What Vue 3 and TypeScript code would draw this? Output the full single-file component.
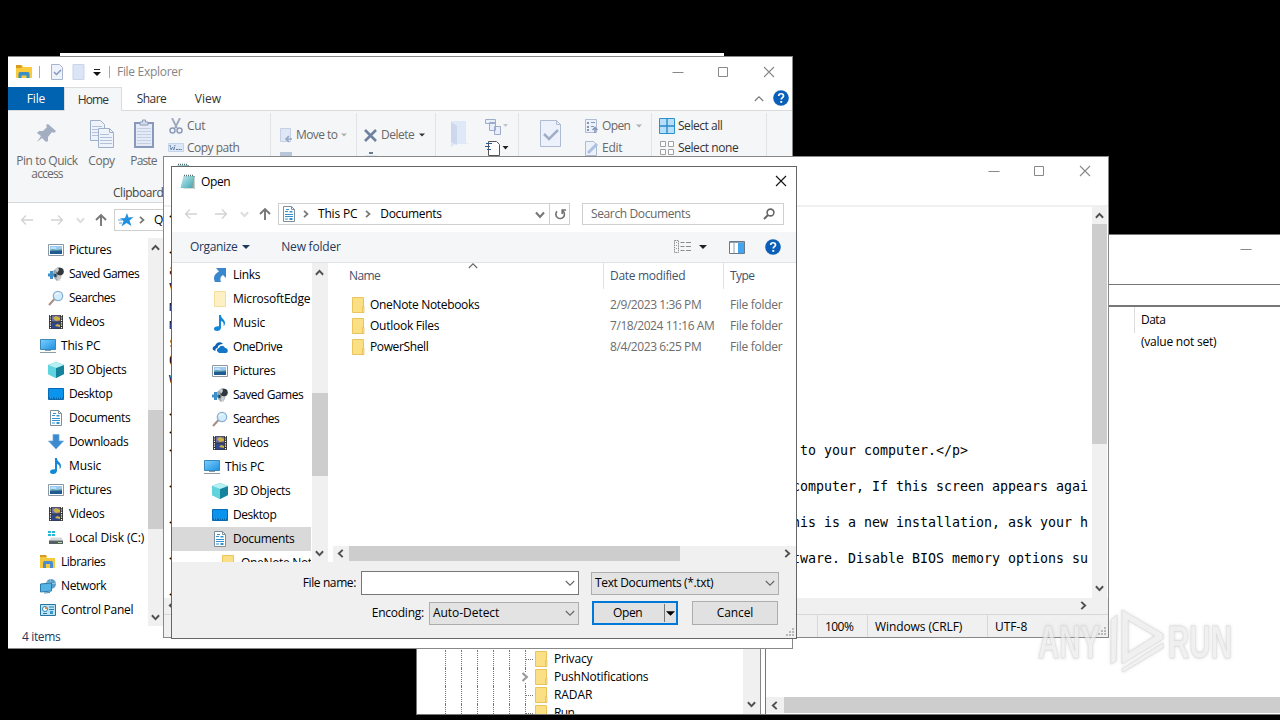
<script setup lang="ts">
interface TreeRow {
  icon: string
  label: string
  width: number
  level: number
  selected?: boolean
}

const explorerTree: TreeRow[] = [
  { icon: 'pictures', label: 'Pictures', width: 42, level: 2 },
  { icon: 'games', label: 'Saved Games', width: 70, level: 2 },
  { icon: 'search', label: 'Searches', width: 46, level: 2 },
  { icon: 'videos', label: 'Videos', width: 35, level: 2 },
  { icon: 'pc', label: 'This PC', width: 39, level: 1 },
  { icon: 'cube', label: '3D Objects', width: 57, level: 2 },
  { icon: 'desktop', label: 'Desktop', width: 43, level: 2 },
  { icon: 'doc', label: 'Documents', width: 61, level: 2 },
  { icon: 'download', label: 'Downloads', width: 59, level: 2 },
  { icon: 'music', label: 'Music', width: 32, level: 2 },
  { icon: 'pictures', label: 'Pictures', width: 42, level: 2 },
  { icon: 'videos', label: 'Videos', width: 35, level: 2 },
  { icon: 'disk', label: 'Local Disk (C:)', width: 75, level: 2 },
  { icon: 'library', label: 'Libraries', width: 44, level: 1 },
  { icon: 'network', label: 'Network', width: 45, level: 1 },
  { icon: 'control', label: 'Control Panel', width: 72, level: 1 },
]

const dialogTree: TreeRow[] = [
  { icon: 'link', label: 'Links', width: 27, level: 2 },
  { icon: 'palefolder', label: 'MicrosoftEdge', width: 77, level: 2 },
  { icon: 'music', label: 'Music', width: 32, level: 2 },
  { icon: 'onedrive', label: 'OneDrive', width: 49, level: 2 },
  { icon: 'pictures', label: 'Pictures', width: 42, level: 2 },
  { icon: 'games', label: 'Saved Games', width: 70, level: 2 },
  { icon: 'search', label: 'Searches', width: 46, level: 2 },
  { icon: 'videos', label: 'Videos', width: 35, level: 2 },
  { icon: 'pc', label: 'This PC', width: 39, level: 1 },
  { icon: 'cube', label: '3D Objects', width: 57, level: 2 },
  { icon: 'desktop', label: 'Desktop', width: 43, level: 2 },
  { icon: 'doc', label: 'Documents', width: 61, level: 2, selected: true },
  { icon: 'folder', label: 'OneNote Notebooks', width: 109, level: 3 },
]

const files = [
  { name: 'OneNote Notebooks', w: 109, date: '2/9/2023 1:36 PM', dw: 91 },
  { name: 'Outlook Files', w: 69, date: '7/18/2024 11:16 AM', dw: 104 },
  { name: 'PowerShell', w: 58, date: '8/4/2023 6:25 PM', dw: 91 },
]

const keys = [
  { label: 'Privacy', w: 38 },
  { label: 'PushNotifications', w: 94, expandable: true },
  { label: 'RADAR', w: 38 },
  { label: 'Run', w: 20 },
]

const lines = [
  { a: '<' }, { a: '' }, { a: '<' }, { a: 'a' }, { a: 'V' }, { a: 'm' }, { a: 'm' },
  { a: 's' }, { a: 'O' }, { a: 'w' }, { a: '' }, { a: '<' }, { a: '<' },
  { a: '<', b: 'to your computer.</p>', short: true }, { a: '' },
  { a: '<', b: 'computer, If this screen appears agai' }, { a: '' },
  { a: '<', b: 'this is a new installation, ask your h' }, { a: '' },
  { a: '<', b: 'software. Disable BIOS memory options su' }, { a: '' }, { a: '<' },
]

// Spreads a label's letters so that it occupies the given width in pixels.
const vFit = {
  mounted(el: HTMLElement, binding: { value: number }) {
    const range = document.createRange()
    range.selectNodeContents(el)
    const natural = range.getBoundingClientRect().width
    const count = (el.textContent ?? '').length
    if (count > 0) el.style.letterSpacing = `${(binding.value + 0.3 - natural) / count}px`
  },
}
</script>

<template>
  <main class="desktop">
    <svg class="defs" width="0" height="0">
      <defs>
        <linearGradient id="gSky" x1="0" y1="0" x2="1" y2="1"><stop offset="0" stop-color="#7cd0ff" /><stop offset="1" stop-color="#1c8fe0" /></linearGradient>
        <linearGradient id="gPad" x1="0" y1="0" x2="1" y2="1"><stop offset="0" stop-color="#c4eef2" /><stop offset="1" stop-color="#3fa5b3" /></linearGradient>
        <symbol id="pictures" viewBox="0 0 16 16"><path d="M.5 2.500h15v11H.5z" fill="#fff" stroke="#8b97a3" /><path d="M2 4h12v8H2z" fill="#9ccaf2" /><path d="M2 8c3-2 5 1 12-1v2H2z" fill="#5c9ba4" /><path d="M2 9l12-.5V12H2z" fill="#215b94" /><path d="M3 5.500h5v1H3z" fill="#e8f6ff" /></symbol>
        <symbol id="games" viewBox="0 0 16 16"><path d="M5 5l5-4 3 1 1 4-1 6-4 3-3-3z" fill="#9aa5ac" /><circle cx="12" cy="5.500" r="3.800" fill="#30383d" /><path d="M7 3l3-2 1 3-2 3z" fill="#c6cdd2" /><path d="M0 7.500h2V5h3v2.500h2v3H5V13H2v-2.500H0z" fill="#3f8fc8" /><path d="M6.500 8h2v3h-2z" fill="#2f3b44" /><path d="M10 9l3 1-1.500 5-3-2z" fill="#c8ccd0" /></symbol>
        <symbol id="search" viewBox="0 0 16 16"><path d="M1 15l5.500-6" stroke="#a98d82" stroke-width="2" /><circle cx="10" cy="6" r="4.700" fill="#d3ecfb" stroke="#8ab0d0" stroke-width="1.300" /><path d="M7.500 5c1-2 3-2 4-1.500" stroke="#fff" fill="none" /></symbol>
        <symbol id="videos" viewBox="0 0 16 16"><path d="M1 1h14v14H1z" fill="#333" /><path d="M4 1.500h8v6H4z" fill="#6f72a8" /><path d="M4 8.500h8v6H4z" fill="#31468c" /><path d="M5 4l3-2 4 2v2l-4 1zM7 12l2-2 3 1v2z" fill="#d0b23f" /><path d="M2.500 1v14M13.500 1v14" stroke="#fff" stroke-width="1.200" stroke-dasharray="1.200 1.200" /></symbol>
        <symbol id="pc" viewBox="0 0 16 16"><path d="M.5 1.500h15v10H.5z" fill="url(#gSky)" stroke="#3a87ba" /><path d="M5 12.500h6M0 14.500h16" stroke="#8d9ba5" /></symbol>
        <symbol id="cube" viewBox="0 0 16 16"><path d="M8 0l8 3v9l-8 4-8-4V3z" fill="#36b5c8" /><path d="M0 3l8 3v10l-8-4z" fill="#5fd3de" /><path d="M8 6l8-3v9l-8 4z" fill="#15839c" /><path d="M0 3l8-3 8 3-8 3z" fill="#b6f0f2" /></symbol>
        <symbol id="desktop" viewBox="0 0 16 16"><path d="M.5 2.500h15v11H.5z" fill="#0b94ee" stroke="#0869b5" /><path d="M1 11.500h14V13H1z" fill="#0868ad" /><path d="M2 12h3M7 12h7" stroke="#50b0f0" stroke-dasharray="1 1" /></symbol>
        <symbol id="doc" viewBox="0 0 16 16"><path d="M2.500.5h8l3 3v12h-11z" fill="#fff" stroke="#7e8e9a" /><path d="M10.500.5v3h3" fill="none" stroke="#7e8e9a" /><path d="M4 5.500h3M4 8.500h8M4 10.500h8M4 13h3" stroke="#3192cf" /><path d="M5 3h3v1H5zM8.500 5h3v1.500h-3zM8.500 12h3v2h-3z" fill="#3192cf" /></symbol>
        <symbol id="download" viewBox="0 0 16 16"><path d="M5 .5h6V7h4.500L8 15 .5 7H5z" fill="#3c8ad0" stroke="#69a9df" stroke-width=".7" /></symbol>
        <symbol id="music" viewBox="0 0 16 16"><path d="M7 0h2c0 4 4 4 4 8 0 2-1 3-1.500 3 .8-3-.8-4.500-2.500-5v6.500C9 15 7 16 5 16s-3-1-3-2.300C2 12 4 11 7 11.300z" fill="#1487d8" /></symbol>
        <symbol id="disk" viewBox="0 0 16 16"><path d="M0 1h3v2H0zM4 1h3v2H4zM0 4h3v2H0zM4 4h3v2H4z" fill="#25b7d6" /><path d="M3 7.500h10.500l1.500 3H1z" fill="#d5d8da" /><path d="M1 10.500h14V14H1z" fill="#586065" /><path d="M10 12.500h4" stroke="#9fe28a" /></symbol>
        <symbol id="library" viewBox="0 0 16 16"><path d="M0 2h6l1 2h8v10H0z" fill="#f5c93d" /><path d="M0 1h6l1 2H0z" fill="#d79921" /><path d="M3 14V9c0-2 2-2 2-2h6s2 0 2 2v5h-3v-4H6v4z" fill="#4b8bd0" /></symbol>
        <symbol id="explorer" viewBox="0 0 16 16"><path d="M0 1h6l1 2h9v11H0z" fill="#fbcb3c" /><path d="M0 1h5l1 3H0z" fill="#d99a1d" /><path d="M2.500 14V10c0-1.500 1-2 2-2h7c1 0 2 .5 2 2v4h-3v-2.500h-5V14z" fill="#3b8fc4" /></symbol>
        <symbol id="network" viewBox="0 0 16 16"><circle cx="11" cy="6" r="5" fill="#5b9fc9" /><path d="M7 4c3 2 5 2 9 1M11 1c-2 4-1 7 0 10" stroke="#9fcbe4" fill="none" /><path d="M.5 6l11-1v8l-11 1z" fill="#54b4e6" stroke="#2c7aa7" /><path d="M4 15l6-.5" stroke="#4b89aa" /></symbol>
        <symbol id="control" viewBox="0 0 16 16"><path d="M.5 2.500h15v11H.5z" fill="#b9e4f8" stroke="#28749c" /><circle cx="5" cy="7" r="2.500" fill="#fff" stroke="#2382b5" /><path d="M5 7V4.500A2.500 2.500 0 0 1 7.500 7z" fill="#e68b36" /><path d="M9 5h5M9 7.500h5M3 11.500h4" stroke="#2579a7" /><path d="M10 9h3v3h-3z" fill="#3a98c7" /></symbol>
        <symbol id="link" viewBox="0 0 16 16"><path d="M4 1h10v10l-3-3c-3 2-3 4-2 7H3C1 11 2 7 7 4.500z" fill="#3a87cc" /></symbol>
        <symbol id="folder" viewBox="0 0 16 16"><path d="M2.500.5h11v15h-11z" fill="#fbdf84" stroke="#e9c45c" /><path d="M12.500 9.500h1.500v6h-1.500z" fill="#fce79f" stroke="#e2b84a" stroke-width=".7" /></symbol>
        <symbol id="palefolder" viewBox="0 0 16 16"><path d="M2.500.5h11v15h-11z" fill="#fdf0c3" stroke="#f3dc9c" /></symbol>
        <symbol id="onedrive" viewBox="0 0 16 16"><path d="M1 11c-1-3 1-4 2-4 1-4 6-5 8-2-3 0-5 1-5.500 4C4 9 3 10 3.500 12z" fill="#0a63b5" /><path d="M6 13c-2-1-1-4 1-4 1-3 5-3 6 0 3 0 4 4 1 5H7z" fill="#1277c9" /></symbol>
        <symbol id="notepad" viewBox="0 0 16 16"><path d="M4 2h11v13H12L1 14z" fill="#7fa5a5" /><path d="M3.500 2h10L11.500 14H.5z" fill="url(#gPad)" /><path d="M4 1.500h10" stroke="#54696b" stroke-width="1.500" stroke-dasharray="1 1" /><path d="M14.300 3v11.500H4" fill="none" stroke="#d9ded0" /></symbol>
        <symbol id="star" viewBox="0 0 16 16"><path d="M9 1l1.500 4.500 5-.5-4 3.500 2 5.500-5-3-5 3.500L5.500 9 2 6.500l5-.5z" fill="#2090e0" /><path d="M0 8h4M1 11h3" stroke="#57a8df" /></symbol>
        <symbol id="help" viewBox="0 0 16 16"><circle cx="8" cy="8" r="7.800" fill="#0a5fb8" /><path d="M5.700 6c0-3 4.800-3 4.800 0 0 1.700-2.300 1.700-2.300 3.600" fill="none" stroke="#fff" stroke-width="1.700" /><path d="M7.300 11h1.900v1.800H7.300z" fill="#fff" /></symbol>
        <symbol id="back" viewBox="0 0 16 16"><path d="M14 8H2.500M7 3.500L2.500 8 7 12.500" fill="none" stroke="currentColor" stroke-width="1.300" /></symbol>
        <symbol id="forward" viewBox="0 0 16 16"><path d="M2 8h11.500M9 3.500L13.500 8 9 12.500" fill="none" stroke="currentColor" stroke-width="1.300" /></symbol>
        <symbol id="up" viewBox="0 0 16 16"><path d="M8 14V3M3 8l5-5 5 5" fill="none" stroke="currentColor" stroke-width="1.900" /></symbol>
        <symbol id="down" viewBox="0 0 8 8"><path d="M.8 2L4 5.500 7.200 2" fill="none" stroke="currentColor" stroke-width="1.700" /></symbol>
        <symbol id="thindown" viewBox="0 0 10 10"><path d="M.8 3L5 7.200 9.200 3" fill="none" stroke="currentColor" stroke-width="1.100" /></symbol>
        <symbol id="min" viewBox="0 0 12 12"><path d="M.5 6.500h11" stroke="currentColor" /></symbol>
        <symbol id="max" viewBox="0 0 12 12"><path d="M1.500 1.500h9v9h-9z" fill="none" stroke="currentColor" /></symbol>
        <symbol id="close" viewBox="0 0 12 12"><path d="M1 1l10 10M11 1L1 11" stroke="currentColor" stroke-width="1.100" /></symbol>
        <symbol id="caret" viewBox="0 0 8 8"><path d="M0 2h8L4 6z" fill="currentColor" /></symbol>
        <symbol id="refresh" viewBox="0 0 12 12"><path d="M9 3.300A4.300 4.300 0 1 1 3.300 2.800M3.800 6V2H0" fill="none" stroke="currentColor" stroke-width="1.600" transform="matrix(-1 0 0 1 12 0)" /></symbol>
        <symbol id="glass" viewBox="0 0 12 12"><circle cx="7.500" cy="4.500" r="3.400" fill="none" stroke="currentColor" stroke-width="1.600" /><path d="M5 7L1 11" stroke="currentColor" stroke-width="1.900" /></symbol>
        <symbol id="grip" viewBox="0 0 9 9"><path d="M6 0h2v2H6zM3 3h2v2H3zM6 3h2v2H6zM0 6h2v2H0zM3 6h2v2H3zM6 6h2v2H6z" fill="#b9b9b9" /></symbol>
      </defs>
    </svg>

    <div class="behind"></div>

    <section class="window registry">
      <header class="reg-title"><svg class="wb"><use href="#min" /></svg></header>
      <div class="reg-address"></div>
      <div class="reg-body">
        <div class="reg-tree">
          <ul class="reg-keys">
            <li v-for="k in keys" :key="k.label">
              <i v-for="n in 5" :key="n" class="rail"></i>
              <i class="rail last"><svg v-if="k.expandable" class="exp"><use href="#down" /></svg><b v-else></b></i>
              <svg class="ico"><use href="#folder" /></svg>
              <span v-fit="k.w">{{ k.label }}</span>
            </li>
          </ul>
          <div class="scroll reg-v"><svg class="ar"><use href="#down" /></svg></div>
        </div>
        <div class="reg-values">
          <div class="reg-head"><span v-fit="24">Data</span></div>
          <div class="reg-row"><span v-fit="75">(value not set)</span></div>
          <div class="reg-h"><svg class="ar left"><use href="#down" /></svg><div class="thumb"></div></div>
        </div>
      </div>
    </section>

    <section class="window explorer">
      <header class="ex-title">
        <svg class="ico"><use href="#explorer" /></svg>
        <i class="bar"></i>
        <svg class="q1" viewBox="0 0 14 16"><path d="M1.500.5h8l3 3v12h-11z" fill="#edf2fb" stroke="#a8b5cf" /><path d="M4 8l2.500 2.500L11 6" fill="none" stroke="#8799bd" stroke-width="1.500" /></svg>
        <svg class="q2" viewBox="0 0 14 16"><path d="M1 .5h11v15H1z" fill="#dbe5f5" stroke="#c8d5eb" /></svg>
        <svg class="q3" viewBox="0 0 8 8"><path d="M1 .5h6" stroke="#222" /><path d="M0 3h8L4 7z" fill="#111" /></svg>
        <i class="bar"></i>
        <span v-fit="65" class="ex-name">File Explorer</span>
        <div class="controls"><svg class="wb"><use href="#min" /></svg><svg class="wb"><use href="#max" /></svg><svg class="wb"><use href="#close" /></svg></div>
      </header>
      <nav class="tabs">
        <span class="tab file"><span v-fit="18">File</span></span>
        <span class="tab home"><span v-fit="30">Home</span></span>
        <span class="tab share"><span v-fit="29">Share</span></span>
        <span class="tab view"><span v-fit="26">View</span></span>
        <svg class="ico collapse"><use href="#thindown" /></svg>
        <svg class="ico"><use href="#help" /></svg>
      </nav>
      <div class="ribbon">
        <div class="group clip">
          <div class="clip-items">
            <div class="big pin">
              <svg width="24" height="32" viewBox="0 0 24 32"><path d="M13 6l8 7-2 2-2-1-4 5v4l-2 1-4-4-5 4 4-6-4-3 2-2h4l4-4-1-2z" fill="#a3aec2" /></svg>
              <span v-fit="61">Pin to Quick</span><span v-fit="31">access</span>
            </div>
            <div class="big copy">
              <svg width="26" height="32" viewBox="0 0 26 32"><path d="M1.500 2.500h10l4 4v16h-14z" fill="#eef3fb" stroke="#9eafca" /><path d="M9.500 10.500h11l4 4v15h-15z" fill="#eef3fb" stroke="#9eafca" /><path d="M3 8.500h10M3 11.500h6M3 14.500h6M3 17.500h6M11 16.500h9M11 19.500h12M11 22.500h12M11 25.500h12" stroke="#b2c0d8" /><path d="M20.500 10.500v4h4" fill="none" stroke="#9eafca" /></svg>
              <span v-fit="26">Copy</span>
            </div>
            <div class="big paste">
              <svg width="24" height="32" viewBox="0 0 24 32"><path d="M3 5h18v24h-18z" fill="#e4ebf7" stroke="#8899bb" stroke-width="2" /><path d="M8 7V4h2.500V2h3v2H16v3z" fill="#d4dbea" stroke="#8b9cbb" /><path d="M5 10.500h14M5 13.500h14M5 16.500h14M5 19.500h14M5 22.500h14M5 25.500h14" stroke="#c4cfe3" /></svg>
              <span v-fit="26">Paste</span>
            </div>
            <div class="smalls">
              <div><svg class="ico" viewBox="0 0 16 16"><path d="M4 0l5 10M12 0L7 10" stroke="#9ba8be" stroke-width="1.800" /><circle cx="4.500" cy="12.500" r="2.500" fill="none" stroke="#8e9dbc" stroke-width="1.500" /><circle cx="11.500" cy="12.500" r="2.500" fill="none" stroke="#8e9dbc" stroke-width="1.500" /></svg><span v-fit="18">Cut</span></div>
              <div><svg class="ico" viewBox="0 0 16 16"><path d="M.5 3.500h15v8H.5z" fill="#dce8f8" stroke="#c4d4e8" /><path d="M2 5l1 5 1.500-3L6 10l1-5M8 9.500h6" fill="none" stroke="#617b9f" stroke-dasharray="2 .6" /></svg><span v-fit="52">Copy path</span></div>
            </div>
          </div>
          <span v-fit="50" class="caption">Clipboard</span>
        </div>
        <div class="group move">
          <div><svg class="ico" viewBox="0 0 16 16"><path d="M1.500 1.500h10v13h-10z" fill="#dfe7f5" stroke="#c4d0e4" /><path d="M7 12h6M10 9l-3 3 3 3" fill="none" stroke="#9aa8c7" stroke-width="1.700" /></svg><span v-fit="41">Move to</span><svg class="car pale"><use href="#caret" /></svg></div>
          <div><svg class="ico" viewBox="0 0 16 16"><path d="M1 0h12v14H1z" fill="#b9c6da" /></svg><span v-fit="39">Copy to</span></div>
        </div>
        <div class="group del">
          <div><svg class="ico" viewBox="0 0 16 16"><path d="M2 3l11 11M13 3L2 14" stroke="#6e819f" stroke-width="2.600" /></svg><span v-fit="33">Delete</span><svg class="car"><use href="#caret" /></svg></div>
          <div><svg class="ico" viewBox="0 0 16 16"><path d="M2 3h12v8H2z" fill="#dfe7f5" /><path d="M6 1h4" stroke="#6b7990" stroke-width="2" /></svg><span v-fit="43">Rename</span></div>
        </div>
        <div class="group fresh">
          <div class="big"><svg width="22" height="32" viewBox="0 0 22 32"><path d="M2 3h15v22l3 1H7l-5 3z" fill="#dfe8f6" /><path d="M2 4l6 4v19l-6-3z" fill="#ccd9ec" /></svg><span>New</span></div>
          <div class="minis">
            <svg width="24" height="17" viewBox="0 0 24 17"><path d="M.5 1.500h10v4H.5zM4.500 4.500h6v8h-6zM9.500 8.500h6v8h-6z" fill="#e9effa" stroke="#9dacca" /><path d="M18 6h5l-2.500 3z" fill="#bdc5d2" /></svg>
            <svg width="24" height="17" viewBox="0 0 24 17"><path d="M3.500 1.500h8l3 3v11h-11z" fill="#fff" stroke="#555" /><path d="M1 3.500h6M0 6.500h5M2 9.500h4" stroke="#245d9e" /><path d="M17.500 6h6l-3 3.500z" fill="#222" /></svg>
          </div>
        </div>
        <div class="group open">
          <div class="big"><svg width="24" height="32" viewBox="0 0 24 32"><path d="M1.500 2.500h16l4 4v22h-20z" fill="#ecf1fb" stroke="#aebbd3" /><path d="M17.500 2.500v4h4" fill="none" stroke="#aebbd3" /><path d="M5 16l5 5 9-9" fill="none" stroke="#a1aec7" stroke-width="2.500" /></svg><span>Properties</span></div>
          <div class="smalls">
            <div><svg class="ico" viewBox="0 0 16 16"><path d="M1.500 1.500h11v13h-11z" fill="#edf1f9" stroke="#aebbd3" /><path d="M3 4h2v2H3zM3 8h2v2H3zM3 11h2v2H3zM7 4h4v1H7zM7 8h3v1H7z" fill="#8394b6" /><path d="M11 15V10M8.500 12l2.500-2.500 2.500 2.500" fill="none" stroke="#8394b6" stroke-width="1.500" /></svg><span v-fit="28">Open</span><svg class="car pale"><use href="#caret" /></svg></div>
            <div><svg class="ico" viewBox="0 0 16 16"><path d="M1.500 1.500h8l3 3v11h-11z" fill="#edf1f9" stroke="#aebbd3" /><path d="M4 13L13 4" stroke="#adc1e2" stroke-width="3" /></svg><span v-fit="20">Edit</span></div>
          </div>
        </div>
        <div class="group select">
          <div><svg class="ico" viewBox="0 0 16 16"><path d="M.5.500h15v15H.5z" fill="#b8dff9" stroke="#2c91cf" /><path d="M8 0v16M0 8h16" stroke="#288bca" stroke-width="1.400" /></svg><span v-fit="44">Select all</span></div>
          <div><svg class="ico" viewBox="0 0 16 16"><path d="M1.500 1.500h5v5h-5zM9.500 1.500h5v5h-5zM1.500 9.500h5v5h-5zM9.500 9.500h5v5h-5z" fill="#fff" stroke="#a0a0a0" /></svg><span v-fit="60">Select none</span></div>
        </div>
      </div>
      <div class="ex-address">
        <svg class="ico faint"><use href="#back" /></svg><svg class="ico faint"><use href="#forward" /></svg><svg class="ar faint"><use href="#down" /></svg><svg class="ico dim"><use href="#up" /></svg>
        <div class="crumbs"><svg class="ico"><use href="#star" /></svg><svg class="ar right"><use href="#down" /></svg><span>Quick access</span></div>
      </div>
      <div class="ex-body">
        <ul class="tree">
          <li v-for="(r, n) in explorerTree" :key="n" :class="'l' + r.level"><svg class="ico"><use :href="'#' + r.icon" /></svg><span v-fit="r.width">{{ r.label }}</span></li>
        </ul>
        <div class="scroll ex-v"><svg class="ar upw"><use href="#down" /></svg><div class="thumb"></div><svg class="ar"><use href="#down" /></svg></div>
      </div>
      <footer class="ex-status"><span v-fit="38">4 items</span><svg width="38" height="12" viewBox="0 0 38 12"><path d="M.5 2v9M.5 10.500h3M6 9.500h4M12 9.500h4M23.500.5h13v10h-13z" fill="none" stroke="#777" /></svg></footer>
    </section>

    <section class="window notepad">
      <header class="np-title"><svg class="ico"><use href="#notepad" /></svg><div class="controls"><svg class="wb"><use href="#min" /></svg><svg class="wb"><use href="#max" /></svg><svg class="wb"><use href="#close" /></svg></div></header>
      <div class="np-body">
        <div class="np-text">
          <div v-for="(l, n) in lines" :key="n" class="line"><span>{{ l.a }}</span><span :class="{ short: l.short }">{{ l.b }}</span></div>
        </div>
        <div class="scroll np-v"><svg class="ar upw"><use href="#down" /></svg><div class="thumb"></div><svg class="ar"><use href="#down" /></svg></div>
      </div>
      <div class="np-h"><svg class="ar left"><use href="#down" /></svg><svg class="ar right"><use href="#down" /></svg></div>
      <footer class="np-status"><span class="c1"><b v-fit="28">100%</b></span><span class="c2"><b v-fit="87">Windows (CRLF)</b></span><span class="c3"><b v-fit="32">UTF-8</b></span><svg class="grip"><use href="#grip" /></svg></footer>
    </section>

    <section class="window dialog">
      <header class="dl-title"><svg class="ico"><use href="#notepad" /></svg><span v-fit="29">Open</span><svg class="wb"><use href="#close" /></svg></header>
      <div class="dl-nav">
        <svg class="ico faint"><use href="#back" /></svg><svg class="ico faint"><use href="#forward" /></svg><svg class="ar faint"><use href="#down" /></svg><svg class="ico dim"><use href="#up" /></svg>
        <div class="crumbs">
          <svg class="ico"><use href="#doc" /></svg><svg class="ar right c-a"><use href="#down" /></svg><span v-fit="39">This PC</span><svg class="ar right c-b"><use href="#down" /></svg><span v-fit="61">Documents</span>
          <svg class="drop"><use href="#down" /></svg><div class="reload"><svg><use href="#refresh" /></svg></div>
        </div>
        <div class="searchbox"><span v-fit="99">Search Documents</span><svg><use href="#glass" /></svg></div>
      </div>
      <div class="dl-tools">
        <span v-fit="47">Organize</span><svg class="tri"><use href="#caret" /></svg><span v-fit="59" class="nf">New folder</span>
        <div class="tools-right">
          <svg width="17" height="14" viewBox="0 0 17 14"><path d="M.5.500h4v12h-4z" fill="none" stroke="#8b8b8b" stroke-dasharray="1.500 .7" /><path d="M6.500 2.500h4M12 2.500h5M6.500 6.500h4M12 6.500h5M6.500 10.500h4M12 10.500h5" stroke="#8b8b8b" /><path d="M2.500 2v9" stroke="#999" stroke-dasharray="1 2" /></svg>
          <svg class="tri"><use href="#caret" /></svg>
          <svg class="pane" width="16" height="13" viewBox="0 0 16 13"><path d="M.5.500h15v12H.5z" fill="#fff" stroke="#66798d" /><path d="M1 1.500h14" stroke="#8ea1b5" /><path d="M9 2h6v10H9z" fill="#43a5ed" /><path d="M5 2v10" stroke="#8ca0b0" /></svg>
          <svg class="ico"><use href="#help" /></svg>
        </div>
      </div>
      <div class="dl-body">
        <ul class="tree">
          <li v-for="r in dialogTree" :key="r.label" :class="['l' + r.level, { selected: r.selected }]"><svg class="ico"><use :href="'#' + r.icon" /></svg><span v-fit="r.width">{{ r.label }}</span></li>
        </ul>
        <div class="scroll dl-v"><svg class="ar upw"><use href="#down" /></svg><div class="thumb"></div><svg class="ar"><use href="#down" /></svg></div>
        <div class="list">
          <div class="cols head"><span><b v-fit="31">Name</b><svg><use href="#thindown" /></svg></span><span><b v-fit="75">Date modified</b></span><span><b v-fit="24">Type</b></span></div>
          <div class="rows">
            <div v-for="f in files" :key="f.name" class="cols">
              <span class="nm"><svg class="ico"><use href="#folder" /></svg><b v-fit="f.w">{{ f.name }}</b></span>
              <span class="meta"><b v-fit="f.dw">{{ f.date }}</b></span>
              <span class="meta"><b v-fit="52">File folder</b></span>
            </div>
          </div>
          <div class="dl-h"><svg class="ar left"><use href="#down" /></svg><div class="thumb"></div><svg class="ar right"><use href="#down" /></svg></div>
        </div>
      </div>
      <footer class="dl-foot">
        <div class="frow r1"><label><b v-fit="53">File name:</b></label><div class="field input"><svg><use href="#thindown" /></svg></div><div class="field type"><b v-fit="118">Text Documents (*.txt)</b><svg><use href="#thindown" /></svg></div></div>
        <div class="frow r2"><label><b v-fit="52">Encoding:</b></label><div class="field enc"><b v-fit="66">Auto-Detect</b><svg><use href="#thindown" /></svg></div><div class="btn primary"><b v-fit="29">Open</b><i><svg><use href="#caret" /></svg></i></div><div class="btn"><b v-fit="36">Cancel</b></div></div>
        <svg class="grip"><use href="#grip" /></svg>
      </footer>
    </section>

    <svg class="brand" width="210" height="76" viewBox="0 0 210 76">
      <g class="mark">
        <text x="7" y="55" textLength="62" lengthAdjust="spacingAndGlyphs">ANY</text>
        <text x="137" y="55" textLength="64" lengthAdjust="spacingAndGlyphs">RUN</text>
        <path d="M91 7l41 24v5L91 61zM97 17v33l27-17zM80 17l6-5v8l-1 38-5 3zM91 66l41-26v5L92 69z" fill-rule="evenodd" />
      </g>
    </svg>
  </main>
</template>

<style>
html, body { margin: 0; background: #000; overflow: hidden; }
</style>

<style scoped>
* { box-sizing: border-box; }
.desktop { position: relative; width: 1280px; height: 720px; overflow: hidden; background: #000; color: #000; font: 12px/18px "Open Sans", "Noto Sans", sans-serif; white-space: nowrap; }
ul { margin: 0; padding: 0; list-style: none; }
b { font-weight: 400; }
svg { display: block; flex: none; }
.defs { position: absolute; }
.ico { width: 16px; height: 16px; }
.ar { width: 9px; height: 9px; color: #505050; }
.wb { width: 12px; height: 12px; color: #888; }
.upw { transform: rotate(180deg); }
.left { transform: rotate(90deg); }
.right { transform: rotate(-90deg); }
.faint { color: #d2d2d2; }
.ar.faint { color: #dcdcdc; }
.dim { color: #777; }
.crumbs .right { width: 8px; height: 8px; color: #777; }
.thumb { background: #cdcdcd; }
.scroll { background: #f0f0f0; display: flex; flex-direction: column; align-items: center; flex: none; }
.scroll .thumb { width: 100%; }
.window { position: absolute; background: #fff; display: flex; flex-direction: column; overflow: hidden; }
.behind { position: absolute; left: 60px; top: 53px; width: 664px; height: 10px; background: #fff; }

.registry { left: 416px; top: 234px; width: 900px; height: 481px; border: 1px solid #777; }
.reg-title { height: 49px; padding: 8px 0 0 823px; flex: none; }
.reg-address { height: 23px; border-top: 1px solid #777; border-bottom: 2px solid #777; flex: none; }
.reg-body { display: flex; flex: 1; min-height: 0; }
.reg-tree { width: 344px; border-right: 1px solid #888; display: flex; margin-right: 4px; }
.reg-keys { flex: 1; display: flex; flex-direction: column; padding-top: 343px; overflow: hidden; }
.reg-keys li { height: 18px; flex: none; display: flex; align-items: center; padding-left: 28px; }
.reg-keys span { margin-left: 5px; }
.rail { width: 16px; height: 18px; border-left: 1px dotted #777; }
.rail.last { width: 8px; display: flex; align-items: center; }
.rail.last b { width: 8px; border-top: 1px dotted #777; }
.exp { width: 10px; height: 10px; margin-left: -6px; transform: rotate(-90deg); color: #999; background: #fff; }
.reg-v { width: 17px; justify-content: flex-end; padding: 0 1px 5px 0; }
.reg-values { border-left: 1px solid #777; flex: 1; display: flex; flex-direction: column; }
.reg-head { height: 26px; margin-left: 368px; border-left: 1px solid #ddd; padding: 4px 0 0 6px; }
.reg-row { padding: 0 0 0 375px; flex: 1; }
.reg-h { height: 16px; margin-bottom: 1px; background: #f0f0f0; display: flex; align-items: center; padding-left: 4px; }
.reg-h .thumb { margin-left: 5px; flex: 1; height: 16px; }

.explorer { left: 8px; top: 56px; width: 785px; height: 593px; border: 1px solid #888; border-left: 0; }
.ex-title { height: 30px; display: flex; align-items: center; padding-left: 8px; flex: none; color: #858585; }
.bar { width: 1px; height: 12px; background: #aaa; }
.ex-title .bar { margin-left: 7px; }
.q1 { width: 14px; height: 16px; margin-left: 10px; }
.q2 { width: 14px; height: 16px; margin-left: 8px; }
.q3 { width: 8px; height: 8px; margin: 2px 0 0 7px; }
.ex-title .q3 + .bar { margin-left: 8px; }
.ex-name { margin-left: 7px; }
.controls { margin-left: auto; display: flex; gap: 34px; }
.controls svg:first-child { margin-right: -1px; }
.ex-title .controls { padding-right: 17px; }
.tabs { height: 24px; flex: none; display: flex; align-items: center; color: #333; border-bottom: 1px solid #dadbdc; }
.tab { height: 23px; display: flex; align-items: center; justify-content: center; }
.file { width: 56px; background: #0063b1; color: #fff; }
.home { width: 58px; height: 24px; background: #f5f6f7; border: 1px solid #dadbdc; border-bottom: 0; align-self: flex-start; }
.share { width: 59px; }
.view { width: 54px; }
.collapse { width: 10px; height: 10px; margin: 0 9px 0 auto; transform: rotate(180deg); color: #777; }
.collapse + .ico { margin: -2px 3px 0 0; }
.ribbon { height: 92px; flex: none; background: #f5f6f7; border-bottom: 1px solid #d7d8d9; display: flex; color: #686868; padding-left: 1px; }
.group { border-right: 1px solid #e2e3e4; margin-top: 2px; flex: none; overflow: hidden; }
.clip { width: 262px; display: flex; flex-direction: column; }
.clip-items { display: flex; height: 70px; }
.big { display: flex; flex-direction: column; align-items: center; line-height: 13px; flex: none; padding-top: 5px; }
.big svg { margin-bottom: 4px; }
.pin { width: 76px; }
.copy { width: 33px; }
.paste { width: 51px; }
.smalls { color: #686868; margin-left: -1px; }
.smalls > div { height: 22px; display: flex; align-items: center; gap: 3px; margin-top: 0; }
.smalls > div:first-child { margin-top: 2px; }
.smalls svg.car { margin-left: 4px; }
.caption { align-self: flex-start; margin: 2px 0 0 104px; color: #444; }
.car { width: 6px; height: 6px; margin-left: 3px; color: #333; }
.car.pale { color: #b0b0b0; }
.move, .del { padding: 10px 0 0 8px; }
.move > div, .del > div { height: 24px; display: flex; align-items: center; gap: 1px; }
.move > div + div, .del > div + div { margin-top: 3px; }
.move > div + div svg, .del > div + div svg { margin-top: -4px; }
.move { width: 86px; }
.move svg.car { margin-left: 3px; }
.del { width: 79px; padding-left: 6px; }
.del > div { gap: 2px; }
.fresh { width: 83px; display: flex; }
.fresh .big { width: 48px; }
.minis { display: flex; flex-direction: column; gap: 5px; padding-top: 5px; margin-left: 1px; }
.open { width: 133px; display: flex; }
.open .big { width: 63px; }
.open .smalls { margin-left: 2px; }
.open .smalls > div { gap: 2px; }
.select { width: 115px; padding: 2px 0 0 7px; color: #333; }
.select > div { height: 22px; display: flex; align-items: center; gap: 3px; }
.ex-address { height: 35px; flex: none; display: flex; align-items: center; padding: 0 0 1px 11px; }
.ex-address > svg:nth-child(2), .dl-nav > svg:nth-child(2) { margin-left: 14px; }
.ex-address > svg:nth-child(3), .dl-nav > svg:nth-child(3) { margin-left: 11px; }
.ex-address > svg:nth-child(4), .dl-nav > svg:nth-child(4) { margin-left: 8px; }
.crumbs { display: flex; align-items: center; height: 22px; border: 1px solid #d0d0d0; }
.ex-address .crumbs { width: 600px; margin-left: 5px; padding-left: 3px; }
.ex-address .crumbs .right { margin: 0 8px 0 4px; }
.ex-body { height: 388px; flex: none; display: flex; padding-left: 1px; }
.tree li { height: 24px; display: flex; align-items: center; gap: 5px; flex: none; }
.ex-body .tree { width: 139px; }
.ex-body .l1 { padding-left: 31px; }
.ex-body .l2 { padding-left: 39px; }
.ex-v { width: 16px; padding: 5px 0 4px; }
.ex-v .thumb { height: 119px; margin: 158px 0 auto; }
.ex-v .ar, .dl-v .ar { margin-right: 2px; }
.ex-status { flex: 1; display: flex; justify-content: space-between; align-items: center; padding: 0 7px 0 14px; color: #1e395b; }
.ex-status svg { margin-top: -8px; }

.notepad { left: 163px; top: 156px; width: 946px; height: 482px; border: 1px solid #888; }
.np-title { height: 50px; border-bottom: 2px solid #f0f0f0; flex: none; display: flex; align-items: flex-start; padding: 6px 17px 0 10px; }
.np-title .controls { padding-top: 2px; }
.np-body { height: 391px; flex: none; display: flex; }
.np-text { width: 928px; padding: 1px 4px 0 5px; font: 13.300px/18px "DejaVu Sans Mono", monospace; letter-spacing: -.007px; }
.line { display: flex; justify-content: space-between; height: 18px; }
.short { padding-right: 120px; }
.np-v { width: 15px; padding: 4px 0 5px; }
.np-v .thumb { height: 220px; margin: 4px 0 auto; }
.np-h { height: 16px; flex: none; background: #f0f0f0; display: flex; align-items: center; justify-content: space-between; padding: 0 20px 2px 3px; }
.np-status { flex: 1; background: #f0f0f0; border-top: 1px solid #d7d7d7; display: flex; align-items: center; padding-left: 653px; }
.np-status span { border-left: 1px solid #d7d7d7; height: 22px; padding: 3px 0 0 7px; }
.c1 { width: 50px; } .c2 { width: 120px; } .c3 { flex: 1; }
.grip { width: 9px; height: 9px; align-self: flex-end; margin: 0 1px 1px 0; }

.dialog { left: 171px; top: 166px; width: 626px; height: 473px; border: 1px solid #666; }
.dl-title { height: 30px; flex: none; display: flex; align-items: center; padding: 0 10px 0 8px; }
.dl-title span { margin-left: 5px; }
.dl-title .wb { margin: -2px -1px 0 auto; color: #111; }
.dl-nav { height: 35px; flex: none; display: flex; align-items: center; padding: 0 0 1px 11px; }
.dl-nav .crumbs { width: 292px; margin-left: 5px; padding-left: 2px; }
.crumbs .c-a { margin: 0 8px 0 5px; }
.crumbs .c-b { margin: 0 8px 0 7px; }
.drop { width: 10px; height: 10px; margin: 2px 4px 0 auto; color: #777; }
.reload { width: 20px; height: 20px; border-left: 1px solid #d0d0d0; display: grid; place-items: center; color: #707070; }
.reload svg { width: 12px; height: 12px; }
.searchbox { width: 202px; height: 22px; margin-left: 12px; border: 1px solid #d0d0d0; display: flex; align-items: center; justify-content: space-between; padding: 0 8px; color: #666; }
.searchbox svg { width: 12px; height: 12px; }
.dl-tools { height: 31px; flex: none; display: flex; align-items: center; background: #f5f6f7; border-bottom: 1px solid #e3e3e3; padding: 0 15px 0 18px; color: #1e395b; }
.tri { width: 8px; height: 8px; margin-left: 5px; }
.nf { margin-left: 31px; }
.tools-right { display: flex; align-items: center; margin-left: auto; }
.tools-right .tri { margin-left: 8px; color: #222; }
.pane { margin: 0 20px 0 22px; }
.dl-body { height: 299px; flex: none; display: flex; }
.dl-body .tree { width: 139px; overflow: hidden; }
.dl-body .l1 { padding-left: 32px; }
.dl-body .l2 { padding-left: 40px; }
.dl-body .l3 { padding-left: 48px; }
.selected { background: #d9d9d9; }
.dl-v { width: 16px; margin-left: 1px; padding: 5px 0 4px; }
.dl-v .thumb { height: 83px; margin: 116px 0 auto; }
.list { flex: 1; margin-left: 5px; display: flex; flex-direction: column; }
.cols { display: grid; grid-template-columns: 271px 120px 1fr; }
.head { height: 26px; color: #43536b; }
.head > span { border-right: 1px solid #e2e2e2; padding: 4px 0 0 6px; }
.head > span:first-child { padding-left: 16px; display: flex; }
.head > span:last-child { border: 0; }
.head svg { width: 10px; height: 10px; transform: rotate(180deg); margin: -6px 0 0 88px; color: #666; }
.rows { padding-top: 5px; flex: 1; }
.rows .cols { height: 21px; align-items: center; }
.nm { display: flex; align-items: center; gap: 4px; padding-left: 17px; }
.meta { padding-left: 6px; color: #6d6d6d; }
.dl-h { height: 16px; background: #f0f0f0; display: flex; align-items: center; padding: 0 4px 1px 3px; }
.dl-h .thumb { width: 331px; height: 15px; margin: 0 auto 0 4px; }
.dl-foot { flex: 1; background: #f0f0f0; display: flex; flex-direction: column; padding: 9px 18px 0 0; }
.frow { display: flex; align-items: center; justify-content: flex-end; height: 24px; }
.r2 { margin-top: 6px; }
.frow label { margin-right: 5px; }
.field { height: 23px; display: flex; align-items: center; justify-content: space-between; border: 1px solid #adadad; background: #e3e3e3; padding: 0 3px; }
.field svg { width: 10px; height: 10px; color: #666; }
.input { width: 218px; height: 24px; background: #fff; border-color: #777; justify-content: flex-end; }
.r1 { margin-right: -1px; }
.type { width: 188px; margin-left: 12px; }
.enc { width: 150px; }
.btn { width: 86px; height: 24px; margin-left: 14px; background: #e1e1e1; border: 1px solid #adadad; display: flex; align-items: center; justify-content: center; }
.primary { border: 2px solid #0078d7; margin-left: 13px; justify-content: space-between; padding-left: 19px; }
.primary i { width: 12px; height: 18px; border-left: 1px solid #777; display: grid; place-items: center; }
.primary svg { width: 9px; height: 9px; }
.dl-foot .grip { margin: auto -17px 1px 0; }

.brand { position: absolute; left: 1031px; top: 603px; }
.mark { font: 700 46px "Liberation Sans", Arial, sans-serif; fill: rgba(250, 250, 250, .6); stroke: rgba(215, 215, 215, .6); stroke-width: 1; filter: drop-shadow(0 0 1.5px rgba(150, 150, 150, .5)); }
</style>
